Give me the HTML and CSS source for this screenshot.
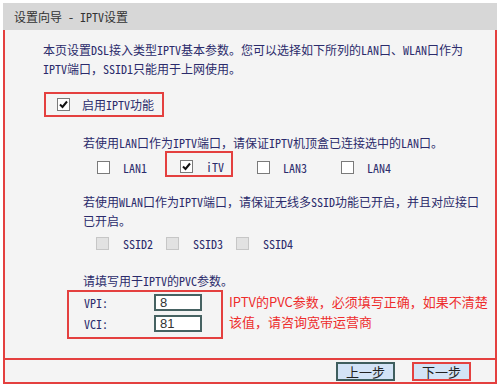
FILE: index.html
```
<!DOCTYPE html>
<html>
<head>
    <link rel="stylesheet" href="styles.css">
</head>
<body>
    <div class="wizard">
        <div class="title">设置向导 - IPTV设置</div>
        <div class="panel">
            <div class="content">
                <p class="intro">本页设置DSL接入类型IPTV基本参数。您可以选择如下所列的LAN口、WLAN口作为<br>IPTV端口，SSID1只能用于上网使用。</p>

                <div class="enable">
                    <span class="cb"><svg width="11" height="11" viewBox="0 0 11 11"><path d="M2 5.5 L4.5 8 L9 2.5" /></svg></span>
                    <span>启用IPTV功能</span>
                </div>

                <div class="group">
                    <p class="tip">若使用LAN口作为IPTV端口，请保证IPTV机顶盒已连接选中的LAN口。</p>
                    <div class="opts lan">
                        <div class="opt"><span class="cb"></span>LAN1</div>
                        <div class="opt mark"><span class="cb"><svg width="11" height="11" viewBox="0 0 11 11"><path d="M2 5.5 L4.5 8 L9 2.5" /></svg></span>iTV</div>
                        <div class="opt wide"><span class="cb"></span>LAN3</div>
                        <div class="opt"><span class="cb"></span>LAN4</div>
                    </div>

                    <p class="tip wlan">若使用WLAN口作为IPTV端口，请保证无线多SSID功能已开启，并且对应接口<br>已开启。</p>
                    <div class="opts ssid">
                        <div class="opt"><span class="cb off"></span>SSID2</div>
                        <div class="opt"><span class="cb off"></span>SSID3</div>
                        <div class="opt"><span class="cb off"></span>SSID4</div>
                    </div>

                    <p class="tip pvc-tip">请填写用于IPTV的PVC参数。</p>
                </div>

                <div class="pvc">
                    <div class="pvc-box">
                        <div class="field"><span class="name">VPI:</span><input type="text" value="8"></div>
                        <div class="field"><span class="name">VCI:</span><input type="text" value="81"></div>
                    </div>
                    <p class="note">IPTV的PVC参数，必须填写正确，如果不清楚<br>该值，请咨询宽带运营商</p>
                </div>
            </div>
            <div class="actions">
                <button class="btn">上一步</button>
                <button class="btn next">下一步</button>
            </div>
        </div>
    </div>
</body>
</html>
```

FILE: styles.css
```
body {
    margin: 0;
    background: #fff;
    font-family: "Noto Sans Mono CJK SC", "Noto Sans CJK SC", sans-serif;
    font-size: 12px;
    color: #2b2b6b;
}
.wizard {
    margin: 3px 0 0 3px;
    width: 494px;
}
.title {
    height: 27px;
    line-height: 27px;
    padding-left: 11px;
    background-color: #d7d7d7;
    color: #333;
}
.panel {
    background-color: #f4f4f4;
    border: 2px solid #e4403f;
    border-top: 0;
}
.content {
    height: 330px;
    box-sizing: border-box;
    padding: 10px 0 0 38px;
    border-bottom: 2px solid #e4403f;
}
.intro,
.tip {
    margin: 0;
    line-height: 19px;
    white-space: nowrap;
}
.enable {
    display: flex;
    align-items: center;
    gap: 12px;
    width: 120px;
    height: 25px;
    box-sizing: border-box;
    margin: 14px 0 0 1px;
    padding-left: 11px;
    border: 2px solid #e4403f;
}
.cb {
    display: flex;
    align-items: center;
    justify-content: center;
    flex-shrink: 0;
    width: 13px;
    height: 13px;
    box-sizing: border-box;
    border: 1px solid #7a7a7a;
    background-color: #fff;
}
.cb path {
    fill: none;
    stroke: #111;
    stroke-width: 2;
}
.cb.off {
    background-color: #e2e2e2;
    border-color: #c6c6c6;
}
.group {
    margin: 16px 0 0 40px;
}
.opts {
    display: flex;
}
.opt {
    display: flex;
    align-items: center;
    gap: 13px;
    box-sizing: border-box;
}
.lan {
    height: 26px;
    margin: -1px 0 0 14px;
}
.lan .opt {
    width: 68px;
    height: 26px;
    padding-top: 6px;
}
.lan .opt.mark {
    border: 2px solid #e4403f;
    padding: 4px 0 0 13px;
    margin-right: 24px;
}
.lan .opt.wide {
    width: 84px;
}
.tip.wlan {
    margin-top: 15px;
}
.ssid {
    height: 20px;
    margin: 3px 0 0 13px;
}
.ssid .opt {
    width: 70px;
    gap: 14px;
}
.tip.pvc-tip {
    margin-top: 18px;
}
.pvc {
    display: flex;
    align-items: flex-start;
    gap: 6px;
    margin-left: 24px;
}
.pvc-box {
    width: 156px;
    height: 49px;
    box-sizing: border-box;
    padding: 2px 0 0 15px;
    border: 2px solid #e4403f;
}
.field {
    display: flex;
    align-items: center;
    height: 17px;
}
.field + .field {
    margin-top: 4px;
}
.name {
    width: 70px;
}
.field input {
    width: 48px;
    height: 17px;
    box-sizing: border-box;
    margin: 0;
    padding: 0 0 0 4px;
    border: 2px solid #466262;
    background-color: #fff;
    font-family: "Liberation Sans", sans-serif;
    font-size: 13px;
    color: #333;
    outline: none;
}
.note {
    margin: 2px 0 0;
    line-height: 20px;
    white-space: nowrap;
    font-family: "Noto Sans CJK SC", sans-serif;
    font-size: 13px;
    color: #ee2c2c;
}
.actions {
    display: flex;
    justify-content: flex-end;
    gap: 17px;
    height: 22px;
    box-sizing: border-box;
    padding: 2px 24px 0 0;
}
.btn {
    width: 59px;
    height: 19px;
    padding: 0;
    border: 2px solid #3f5e5e;
    background-color: #d3e3f6;
    font-family: "Noto Sans CJK SC", sans-serif;
    font-size: 13px;
    line-height: 15px;
    color: #222;
}
.btn.next {
    border-color: #e4403f;
}
```
